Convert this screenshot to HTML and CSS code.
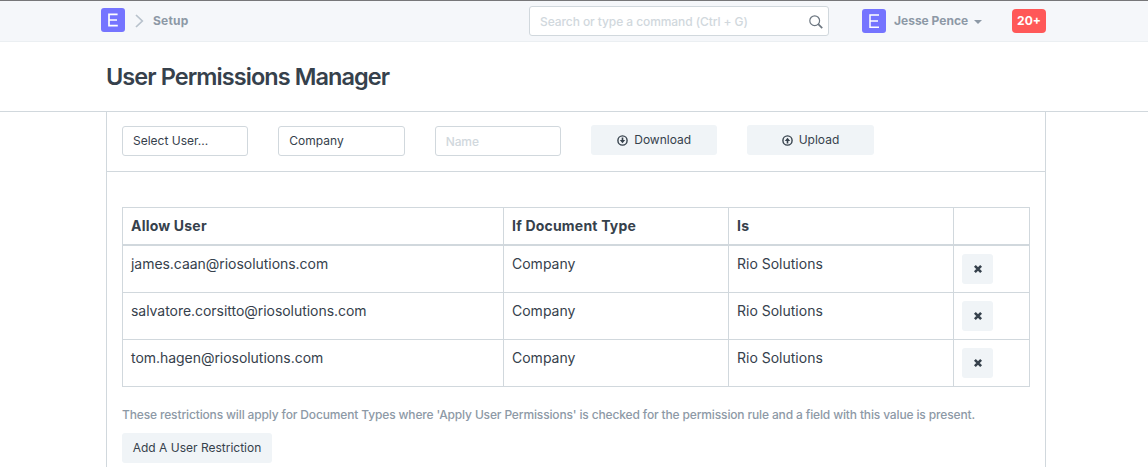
FILE: index.html
```html
<!DOCTYPE html>
<html lang="en">
<head>
<meta charset="utf-8">
<title>User Permissions Manager</title>
<link rel="stylesheet" href="styles.css">
</head>
<body>
<header class="navbar">
  <div class="brand">
    <svg class="logo" viewBox="0 0 24 24"><rect width="24" height="24" rx="3" fill="#7574ff"/><path d="M16.6 6.3H8v11.4h8.8M8 12h8" fill="none" stroke="#fff" stroke-width="1.7"/></svg>
    <svg class="chevron" viewBox="0 0 9 14"><path d="M1 1l6.3 6L1 13" fill="none" stroke="#b8c2cc" stroke-width="1.7"/></svg>
    <a class="crumb">Setup</a>
  </div>
  <div class="search">
    <span>Search or type a command (Ctrl + G)</span>
    <svg class="search-icon" viewBox="0 0 14 14"><circle cx="5.7" cy="5.7" r="4.9" fill="none" stroke="#6c7680" stroke-width="1.2"/><path d="M9.2 9.2l4 4" stroke="#6c7680" stroke-width="1.7"/></svg>
  </div>
  <div class="user">
    <svg class="logo" viewBox="0 0 24 24"><rect width="24" height="24" rx="3" fill="#7574ff"/><path d="M17 6.1H8v12.1h9M8 12h8" fill="none" stroke="#fff" stroke-width="1.5"/></svg>
    <span class="user-name">Jesse Pence</span>
    <span class="caret"></span>
  </div>
  <span class="badge">20+</span>
</header>
<div class="page-head"><h1>User Permissions Manager</h1></div>
<main class="page">
  <form class="filters">
    <div class="control">Select User...</div>
    <div class="control">Company</div>
    <div class="control empty">Name</div>
    <div class="btn"><svg class="circle-icon" viewBox="0 0 11 11"><circle cx="5.5" cy="5.5" r="4.6" fill="none" stroke="#36414c" stroke-width="1.4"/><path d="M4.7 2.6h1.6v2.5h1.9L5.5 8.2 2.8 5.1h1.9z" fill="#36414c"/></svg>Download</div>
    <div class="btn"><svg class="circle-icon" viewBox="0 0 11 11"><circle cx="5.5" cy="5.5" r="4.6" fill="none" stroke="#36414c" stroke-width="1.4"/><path d="M4.7 8.4h1.6V5.9h1.9L5.5 2.8 2.8 5.9h1.9z" fill="#36414c"/></svg>Upload</div>
  </form>
  <section class="content">
    <table class="rules">
      <colgroup><col class="c-user"><col class="c-type"><col class="c-value"><col class="c-action"></colgroup>
      <thead>
        <tr><th>Allow User</th><th>If Document Type</th><th>Is</th><th></th></tr>
      </thead>
      <tbody>
        <tr><td class="mail">james.caan@riosolutions.com</td><td>Company</td><td>Rio Solutions</td><td><div class="btn remove"><svg viewBox="0 0 10 10"><path d="M1.9 1.9l6.2 6.2M8.1 1.9L1.9 8.1" stroke="#36414c" stroke-width="2.6"/></svg></div></td></tr>
        <tr><td class="mail">salvatore.corsitto@riosolutions.com</td><td>Company</td><td>Rio Solutions</td><td><div class="btn remove"><svg viewBox="0 0 10 10"><path d="M1.9 1.9l6.2 6.2M8.1 1.9L1.9 8.1" stroke="#36414c" stroke-width="2.6"/></svg></div></td></tr>
        <tr><td class="mail">tom.hagen@riosolutions.com</td><td>Company</td><td>Rio Solutions</td><td><div class="btn remove"><svg viewBox="0 0 10 10"><path d="M1.9 1.9l6.2 6.2M8.1 1.9L1.9 8.1" stroke="#36414c" stroke-width="2.6"/></svg></div></td></tr>
      </tbody>
    </table>
    <p class="help">These restrictions will apply for Document Types where 'Apply User Permissions' is checked for the permission rule and a field with this value is present.</p>
    <div class="btn add">Add A User Restriction</div>
  </section>
</main>
</body>
</html>
```
FILE: styles.css
```css
* { box-sizing: border-box; }
body {
  margin: 0;
  height: 467px;
  overflow: hidden;
  display: flex;
  flex-direction: column;
  background: #fff;
  color: #36414c;
  font: 14px/20px Inter, "Liberation Sans", sans-serif;
  white-space: nowrap;
}
svg { display: block; flex: none; }
.navbar {
  flex: none;
  display: flex;
  align-items: flex-start;
  height: 42px;
  padding-left: 101px;
  background: #f5f7fa;
  border-top: 1px solid #777779;
  border-bottom: 1px solid #ebeff2;
  font-size: 12px;
}
.brand { display: flex; align-items: center; width: 428px; padding-top: 7px; }
.logo { width: 24px; height: 24px; }
.chevron { width: 9px; height: 14px; margin: 1px 9px 0 10px; }
.crumb { font-weight: 700; color: #8d99a6; padding-top: 1px; letter-spacing: 0.2px; }
.search {
  display: flex;
  align-items: center;
  justify-content: space-between;
  width: 300px;
  height: 30px;
  margin-top: 5px;
  padding: 1px 5px 0 10px;
  background: #fff;
  border: 1px solid #d1d8dd;
  border-radius: 3px;
  color: #d1d8dd;
  font-weight: 500;
  letter-spacing: -0.08px;
}
.search-icon { width: 14px; height: 14px; }
.user { display: flex; align-items: center; width: 150px; padding: 8px 0 0 33px; }
.user-name { margin-left: 8px; font-weight: 700; color: #8d99a6; }
.caret { margin: 1px 0 0 6px; border: 4px solid transparent; border-top-color: #8d99a6; border-bottom: 0; }
.badge {
  width: 34px;
  height: 24px;
  margin: 8px 0 0 33px;
  border-radius: 4px;
  background: #ff5858;
  color: #fff;
  font-weight: 700;
  line-height: 24px;
  text-align: center;
}
.page-head {
  flex: none;
  height: 70px;
  padding: 19px 0 0 106px;
  border-bottom: 1px solid #d1d8dd;
}
h1 { margin: 0; font-size: 23.5px; line-height: 32px; font-weight: 600; letter-spacing: -0.93px; }
.page {
  flex: 1;
  width: 940px;
  margin-left: 106px;
  border: solid #d1d8dd;
  border-width: 0 1px;
}
.filters {
  display: grid;
  grid-template-columns: repeat(5, 126.33px);
  column-gap: 30px;
  height: 60px;
  padding: 13px 0 0 15px;
  border-bottom: 1px solid #d1d8dd;
  font-size: 12px;
}
.control { height: 30px; margin-top: 1px; padding: 4px 10px; border: 1px solid #d1d8dd; border-radius: 3px; }
.empty { color: #d1d8dd; padding-top: 5px; font-weight: 500; letter-spacing: -0.1px; }
.btn { display: flex; align-items: center; justify-content: center; height: 30px; border-radius: 3px; background: #f0f4f7; font-size: 12px; }
.circle-icon { width: 11px; height: 11px; margin-right: 6px; }
.content { padding: 35px 15px 0; }
.rules {
  width: 908px;
  table-layout: fixed;
  border-collapse: separate;
  border-spacing: 0;
  border: solid #d1d8dd;
  border-width: 1px 0 0 1px;
}
.c-user { width: 381px; }
.c-type, .c-value { width: 225px; }
.c-action { width: 76px; }
th, td { padding: 8px; text-align: left; vertical-align: top; border: solid #d1d8dd; border-width: 0 1px 1px 0; }
th { height: 38px; font-weight: 700; border-bottom-width: 2px; letter-spacing: 0.2px; }
td { height: 47px; }
.mail { letter-spacing: -0.04px; }
.remove { width: 31px; }
.remove svg { width: 10px; height: 10px; }
.help { margin: 18px 0 8px; color: #8d99a6; font-size: 12px; font-weight: 500; letter-spacing: -0.144px; }
.add { width: 150px; }
```
